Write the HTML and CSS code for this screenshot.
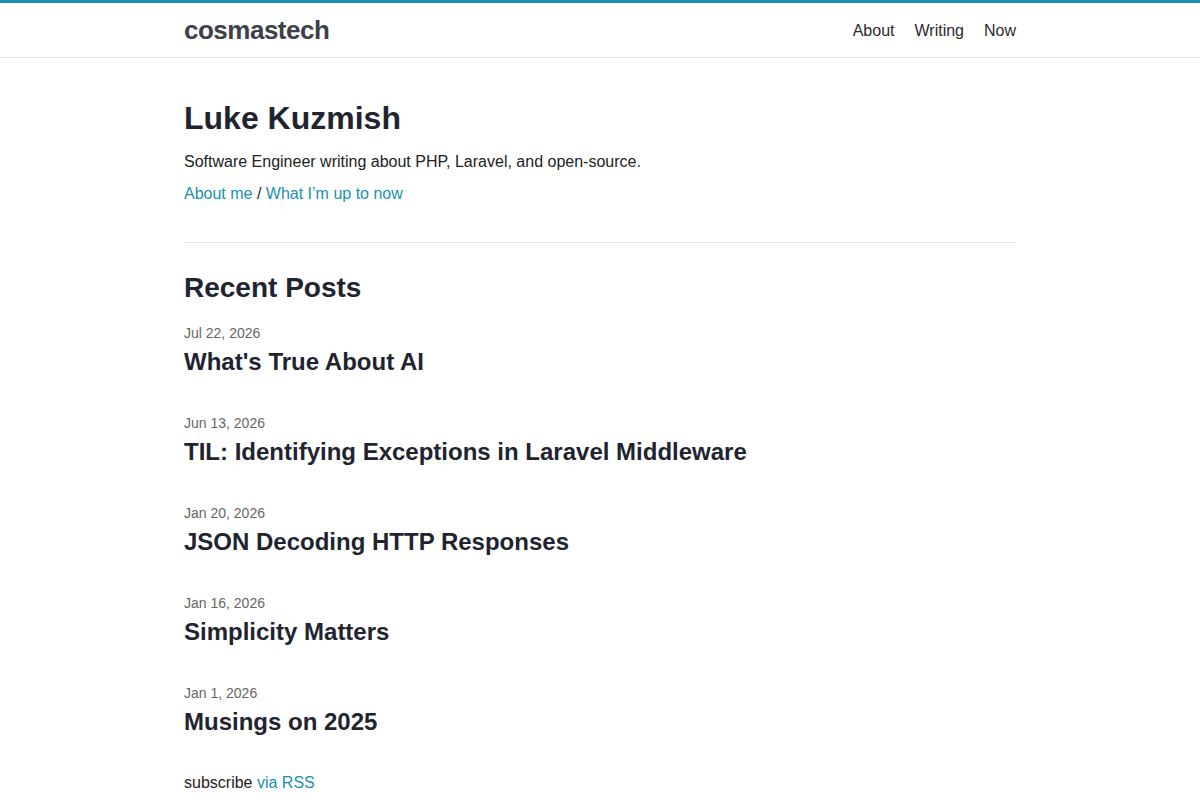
FILE: index.html
```html
<!DOCTYPE html>
<html lang="en">
<head>
    <meta charset="UTF-8">
    <meta name="viewport" content="width=device-width, initial-scale=1.0">
    <title>cosmastech</title>
    <link rel="stylesheet" href="styles.css">
</head>
<body>
    <header class="site-header">
        <div class="wrapper header-row">
            <a class="site-title" href="#">cosmastech</a>
            <nav class="site-nav">
                <a href="#">About</a>
                <a href="#">Writing</a>
                <a href="#">Now</a>
            </nav>
        </div>
    </header>

    <main class="wrapper">
        <section class="intro">
            <h1>Luke Kuzmish</h1>
            <p class="tagline">Software Engineer writing about PHP, Laravel, and open-source.</p>
            <p class="intro-links"><a href="#">About me</a> / <a href="#">What I’m up to now</a></p>
        </section>

        <hr class="divider">

        <h2 class="section-title">Recent Posts</h2>
        <ul class="post-list">
            <li>
                <span class="post-meta">Jul 22, 2026</span>
                <h3><a href="#">What's True About AI</a></h3>
            </li>
            <li>
                <span class="post-meta">Jun 13, 2026</span>
                <h3><a href="#">TIL: Identifying Exceptions in Laravel Middleware</a></h3>
            </li>
            <li>
                <span class="post-meta">Jan 20, 2026</span>
                <h3><a href="#">JSON Decoding HTTP Responses</a></h3>
            </li>
            <li>
                <span class="post-meta">Jan 16, 2026</span>
                <h3><a href="#">Simplicity Matters</a></h3>
            </li>
            <li>
                <span class="post-meta">Jan 1, 2026</span>
                <h3><a href="#">Musings on 2025</a></h3>
            </li>
        </ul>

        <p class="rss">subscribe <a href="#">via RSS</a></p>
    </main>
</body>
</html>
```

FILE: styles.css
```css
body {
    margin: 0;
    font-family: "Liberation Sans", Arial, sans-serif;
    font-size: 16px;
    line-height: 1.5;
    color: #222;
    background: #fff;
}
a { color: #1a91ab; text-decoration: none; }
.wrapper {
    max-width: 832px;
    margin: 0 auto;
}
.site-header {
    border-top: 3px solid #1a8db0;
    border-bottom: 1px solid #e6e6e6;
}
.header-row {
    display: flex;
    justify-content: space-between;
    align-items: center;
    height: 54px;
}
.site-title {
    font-size: 26px;
    font-weight: bold;
    color: #3d4047;
    letter-spacing: -0.5px;
}
.site-nav { display: flex; gap: 20px; padding-top: 2px; }
.site-nav a { color: #2b2b2b; }
.intro { padding-top: 40px; }
.intro h1 {
    margin: 0 0 12px;
    font-size: 32px;
    line-height: 40px;
    color: #1f2430;
}
.tagline { margin: 0 0 8px; line-height: 24px; }
.intro-links { margin: 0; line-height: 24px; }
.divider {
    border: 0;
    border-top: 1px solid #e6e6e6;
    margin: 36px 0 27px;
}
.section-title {
    margin: 0 0 17px;
    font-size: 28px;
    line-height: 36px;
    color: #1f2430;
}
.post-list { list-style: none; margin: 0; padding: 0; }
.post-list li { margin-bottom: 32px; }
.post-list li:last-child { margin-bottom: 30px; }
.post-meta {
    display: block;
    font-size: 14px;
    line-height: 20px;
    color: #666;
}
.post-list h3 {
    margin: 0;
    font-size: 24px;
    line-height: 38px;
}
.post-list h3 a { color: #1f2430; }
.rss { margin: 0; }
```
